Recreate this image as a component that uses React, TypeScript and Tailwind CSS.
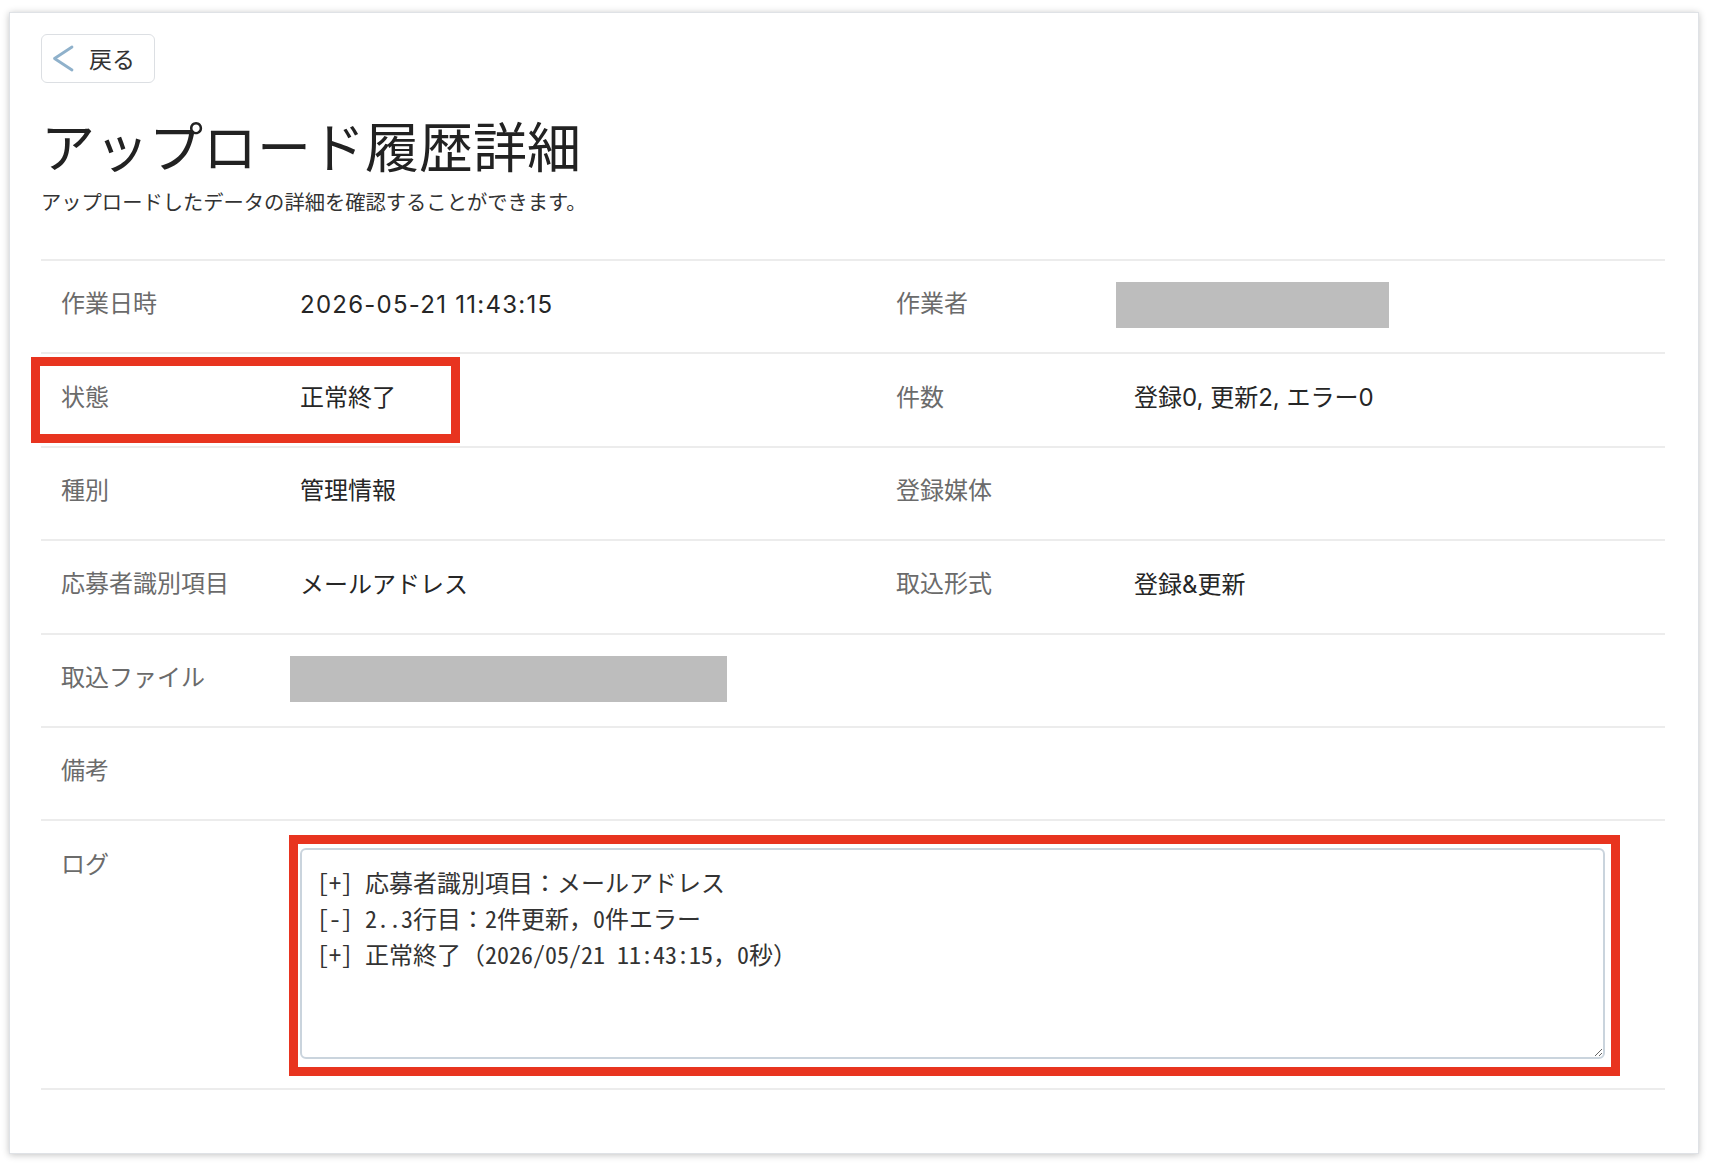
import { ReactNode } from 'react'

interface Cell {
  label: string
  value?: ReactNode
}

const valueFont = "font-['Inter','Noto_Sans_CJK_JP',sans-serif]"
const labelCls = 'pl-[20px] pb-[5px] text-[24px] leading-[36px] text-[#6b6b6b]'

function Redacted({ width, offset }: { width: string; offset: string }) {
  return <div className={`h-[46px] bg-[#bdbdbd] ${width} ${offset}`} />
}

function Mark({ className }: { className: string }) {
  return <div className={`pointer-events-none absolute border-[9px] border-[#e8341f] ${className}`} />
}

function PairRow({ left, right, mark }: { left: Cell; right: Cell; mark?: boolean }) {
  return (
    <div className="relative flex h-[93.4px] items-center border-b-2 border-[#ececec] pb-[4px]">
      {mark && <Mark className="-left-[10px] top-[3px] bottom-[3px] w-[429px]" />}
      <div className={`w-[259px] ${labelCls}`}>{left.label}</div>
      <div className={`w-[576px] text-[24px] leading-[36px] text-[#262626] ${valueFont}`}>{left.value}</div>
      <div className={`w-[258px] ${labelCls}`}>{right.label}</div>
      <div className={`flex-1 text-[24px] leading-[36px] text-[#262626] ${valueFont}`}>{right.value}</div>
    </div>
  )
}

const rows: { left: Cell; right: Cell; mark?: boolean }[] = [
  {
    left: { label: '作業日時', value: <span className="tracking-[1.25px]">2026-05-21 11:43:15</span> },
    right: { label: '作業者', value: <Redacted width="w-[273px]" offset="-ml-[18px]" /> },
  },
  {
    left: { label: '状態', value: '正常終了' },
    right: { label: '件数', value: '登録0, 更新2, エラー0' },
    mark: true,
  },
  { left: { label: '種別', value: '管理情報' }, right: { label: '登録媒体' } },
  { left: { label: '応募者識別項目', value: 'メールアドレス' }, right: { label: '取込形式', value: '登録&更新' } },
]

const log = [
  '[+] 応募者識別項目：メールアドレス',
  '[-] 2..3行目：2件更新，0件エラー',
  '[+] 正常終了（2026/05/21 11:43:15，0秒）',
].join('\n')

export default function App() {
  return (
    <div className="min-h-screen bg-white pl-[9px] pr-[11px] pt-[12px] pb-[12px] font-['Noto_Sans_CJK_JP',sans-serif]">
      <div className="h-[1142px] border border-[#dfe2e6] bg-white pl-[31px] pr-[33px] pt-[21px] shadow-[0_1px_7px_rgba(0,0,0,0.24)]">
        <button
          type="button"
          className="flex h-[49px] w-[114px] items-center rounded-[6px] border border-[#dcdfe3] bg-white pl-[10px] text-[23px] text-[#333]"
        >
          <svg width="22" height="27" viewBox="0 0 22 27">
            <path
              d="M20 2 L2.5 13.5 L20 25"
              fill="none"
              stroke="#8fb1cb"
              strokeWidth="2.8"
              strokeLinecap="round"
              strokeLinejoin="round"
            />
          </svg>
          <span className="ml-[15px]">戻る</span>
        </button>

        <h1 className="mt-[30px] text-[54px] leading-[64px] text-[#222]">アップロード履歴詳細</h1>
        <p className="mt-[9px] text-[20.3px] leading-[30px] text-[#333]">
          アップロードしたデータの詳細を確認することができます。
        </p>

        <div className="mt-[43px] border-t-2 border-[#ececec]">
          {rows.map((r) => (
            <PairRow key={r.left.label} left={r.left} right={r.right} mark={r.mark} />
          ))}

          <div className="flex h-[93.4px] items-center border-b-2 border-[#ececec] pb-[4px]">
            <div className={`w-[249px] ${labelCls}`}>取込ファイル</div>
            <Redacted width="w-[437px]" offset="mt-[2px]" />
          </div>

          <div className="flex h-[93.4px] items-center border-b-2 border-[#ececec] pb-[4px]">
            <div className={`w-[259px] ${labelCls}`}>備考</div>
          </div>

          <div className="flex border-b-2 border-[#ececec] pt-[27px] pb-[29px]">
            <div className="-mt-[3px] w-[259px] pl-[20px] text-[24px] leading-[36px] text-[#6b6b6b]">ログ</div>
            <div className="relative">
              <Mark className="-left-[11px] -top-[13px] -right-[15px] -bottom-[17px]" />
              <textarea
                readOnly
                value={log}
                className="block h-[211px] w-[1305px] rounded-[6px] border-2 border-[#cad4dd] bg-white px-[15px] pt-[14px] text-[24px] leading-[36px] text-[#333] outline-none font-['Noto_Sans_Mono_CJK_JP','DejaVu_Sans_Mono','Noto_Sans_CJK_JP',monospace]"
              />
            </div>
          </div>
        </div>
      </div>
    </div>
  )
}
